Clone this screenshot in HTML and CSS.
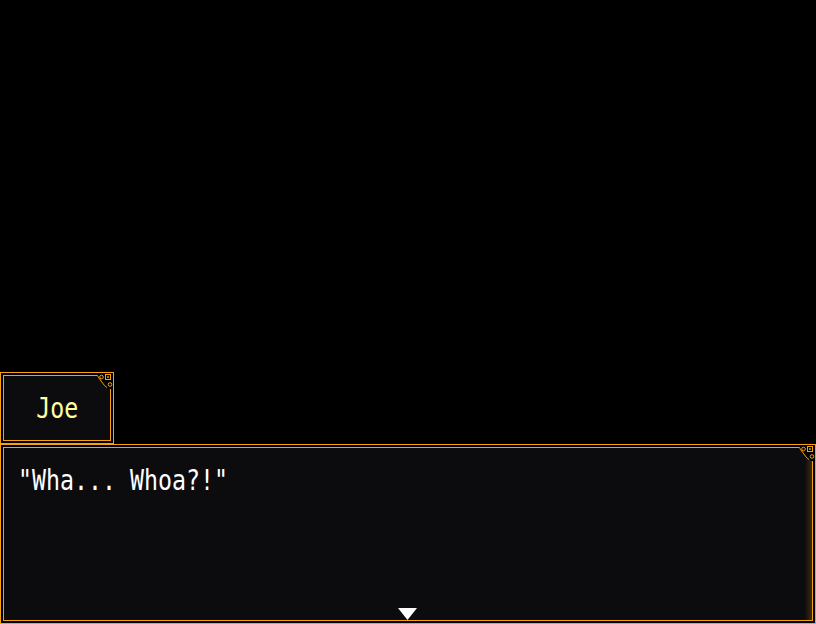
FILE: index.html
```html
<!DOCTYPE html>
<html>
<head>
<meta charset="utf-8">
<link rel="stylesheet" href="styles.css">
</head>
<body>
<div class="screen">
  <div class="stage"></div>
  <div class="window namebox">
    <svg class="orn" width="18" height="18" viewBox="0 0 18 18">
      <path d="M0 1 H17 V17 H13 L11 15.5 L8.5 13.5 L2.5 5.5 L1.5 4 L0 4 Z" fill="#000"/>
      <path d="M0 3.5 H1.5 L2.5 5.5 L8.5 13.5 L11 15.5" fill="none" stroke="#f8a10c" stroke-width="1"/>
      <circle cx="5.5" cy="5" r="1.8" fill="none" stroke="#f8a10c" stroke-width="1"/>
      <rect x="9.5" y="2.5" width="5" height="5" fill="none" stroke="#f8a10c" stroke-width="1"/>
      <circle cx="12" cy="5" r="0.9" fill="#f8a10c"/>
      <circle cx="14" cy="12.5" r="1.8" fill="none" stroke="#f8a10c" stroke-width="1"/>
    </svg>
    <span class="txt name">Joe</span>
  </div>
  <div class="window msgbox">
    <svg class="orn" width="18" height="18" viewBox="0 0 18 18">
      <path d="M0 1 H17 V17 H13 L11 15.5 L8.5 13.5 L2.5 5.5 L1.5 4 L0 4 Z" fill="#000"/>
      <path d="M0 3.5 H1.5 L2.5 5.5 L8.5 13.5 L11 15.5" fill="none" stroke="#f8a10c" stroke-width="1"/>
      <circle cx="5.5" cy="5" r="1.8" fill="none" stroke="#f8a10c" stroke-width="1"/>
      <rect x="9.5" y="2.5" width="5" height="5" fill="none" stroke="#f8a10c" stroke-width="1"/>
      <circle cx="12" cy="5" r="0.9" fill="#f8a10c"/>
      <circle cx="14" cy="12.5" r="1.8" fill="none" stroke="#f8a10c" stroke-width="1"/>
    </svg>
    <div class="line"><span class="txt msg">"Wha... Whoa?!"</span></div>
    <svg class="pause" width="19" height="12" viewBox="0 0 19 12">
      <polygon points="0,0 19,0 9.5,12" fill="#fff"/>
    </svg>
  </div>
</div>
</body>
</html>
```

FILE: styles.css
```css
html, body {
  margin: 0;
  padding: 0;
  background: #000;
}

.screen {
  width: 816px;
  height: 624px;
  display: flex;
  flex-direction: column;
  overflow: hidden;
  font-family: "DejaVu Sans Mono", monospace;
  font-size: 28px;
  line-height: 36px;
}

.stage {
  flex: 1;
}

.window {
  position: relative;
  box-sizing: border-box;
  border: 1px solid #f8a10c;
  background: #0c0c0f;
  box-shadow: inset 0 0 0 2px #000, inset 0 0 0 3px #f8a10c;
  padding: 18px 17px 16px;
  flex: none;
}

.namebox {
  width: 114px;
  height: 72px;
  text-align: center;
  white-space: nowrap;
}

.msgbox {
  width: 816px;
  height: 180px;
}

.msgbox::before {
  content: "";
  position: absolute;
  top: 3px;
  bottom: 3px;
  right: 3px;
  width: 7px;
  background: linear-gradient(to right, rgba(248, 161, 12, 0), rgba(248, 161, 12, 0.22));
}

.orn {
  position: absolute;
  top: -1px;
  right: -1px;
  display: block;
}

.txt {
  display: inline-block;
  transform: scaleX(0.83);
  white-space: pre;
}

.name {
  color: #ffffa0;
  transform-origin: center;
}

.msg {
  color: #fff;
  transform-origin: left;
}

.line {
  padding-left: 0;
}

.pause {
  position: absolute;
  bottom: 3px;
  left: calc(50% - 10px);
  display: block;
}
```
